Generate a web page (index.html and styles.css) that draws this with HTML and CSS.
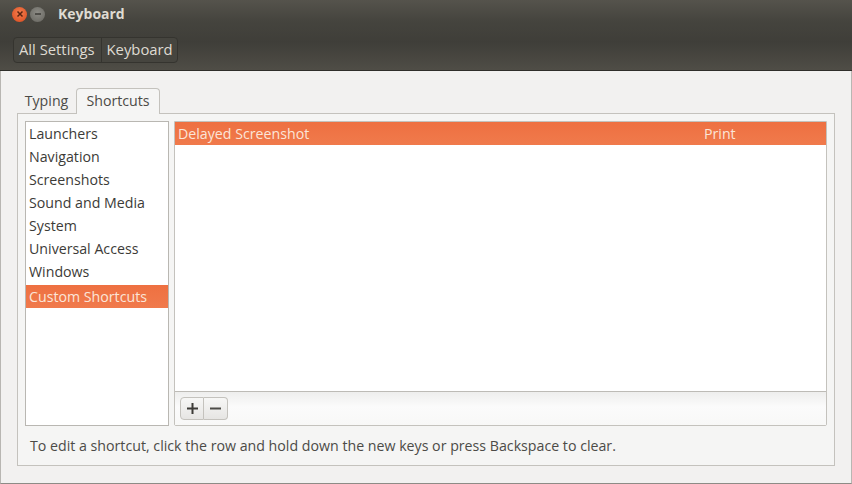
FILE: index.html
```html
<!DOCTYPE html>
<html lang="en">
<head>
    <meta charset="UTF-8">
    <title>Keyboard</title>
    <link rel="stylesheet" href="styles.css">
</head>
<body>

    <!-- Title bar and toolbar -->
    <div class="header">
        <div class="titlebar">
            <span class="win-btn close-btn">
                <svg width="8" height="8" viewBox="0 0 8 8"><path d="M1.5 1.5l5 5M6.5 1.5l-5 5" stroke="#5a2410" stroke-width="1.5" fill="none"/></svg>
            </span>
            <span class="win-btn min-btn">
                <svg width="8" height="8" viewBox="0 0 8 8"><path d="M1 4h6" stroke="#3c3b37" stroke-width="1.5" fill="none"/></svg>
            </span>
            <span class="title">Keyboard</span>
        </div>
        <div class="crumbs">
            <span class="crumb">All Settings</span>
            <span class="crumb">Keyboard</span>
        </div>
    </div>

    <div class="content">
        <div class="tabs">
            <span class="tab">Typing</span>
            <span class="tab active">Shortcuts</span>
        </div>

        <div class="notebook">
            <div class="panes">
                <ul class="categories">
                    <li>Launchers</li>
                    <li>Navigation</li>
                    <li>Screenshots</li>
                    <li>Sound and Media</li>
                    <li>System</li>
                    <li>Universal Access</li>
                    <li>Windows</li>
                    <li class="selected">Custom Shortcuts</li>
                </ul>

                <div class="shortcuts">
                    <div class="shortcut-list">
                        <div class="shortcut-row">
                            <span class="shortcut-name">Delayed Screenshot</span>
                            <span class="shortcut-key">Print</span>
                        </div>
                    </div>
                    <div class="list-toolbar">
                        <button class="tool-btn">
                            <svg width="11" height="11" viewBox="0 0 11 11"><path d="M5.5 0v11M0 5.5h11" stroke="#3c3b37" stroke-width="2" fill="none"/></svg>
                        </button>
                        <button class="tool-btn">
                            <svg width="11" height="11" viewBox="0 0 11 11"><path d="M0 5.5h11" stroke="#4c4b47" stroke-width="2" fill="none"/></svg>
                        </button>
                    </div>
                </div>
            </div>
            <p class="hint">To edit a shortcut, click the row and hold down the new keys or press Backspace to clear.</p>
        </div>
    </div>

</body>
</html>
```

FILE: styles.css
```css
* {
    box-sizing: border-box;
}

html, body {
    height: 100%;
}

body {
    margin: 0;
    display: flex;
    flex-direction: column;
    height: 484px;
    overflow: hidden;
    font-family: "Open Sans", "Noto Sans", sans-serif;
    font-size: 14.2px;
    color: #3c3b37;
    background-color: #f2f1f0;
}

/* Header */
.header {
    flex: none;
    height: 71px;
    padding: 0 12px;
    background: linear-gradient(#55534c 0%, #45443e 30%, #3f3e39 60%, #4f4d46 100%);
    border-bottom: 1px solid #2f2e2a;
}

.titlebar {
    display: flex;
    align-items: center;
    height: 28px;
}

.win-btn {
    display: flex;
    align-items: center;
    justify-content: center;
    width: 15px;
    height: 15px;
    border-radius: 50%;
}

.close-btn {
    background: radial-gradient(circle at 50% 40%, #f57f4f, #d8491d);
}

.min-btn {
    margin-left: 3px;
    background: radial-gradient(circle at 50% 40%, #8d8c86, #65645e);
}

.title {
    margin-left: 13px;
    padding-bottom: 2px;
    font-weight: 700;
    font-size: 14px;
    color: #dfdbd2;
}

.crumbs {
    display: inline-flex;
    height: 26px;
    margin-top: 9px;
    margin-left: 1px;
    font-size: 14.8px;
    border: 1px solid #35342f;
    border-radius: 4px;
    background-color: #46453f;
}

.crumb {
    display: flex;
    align-items: center;
    padding: 0 6px 2px 5px;
    color: #dfdbd2;
    border-right: 1px solid #35342f;
}

.crumb:last-child {
    padding-right: 4px;
    border-right: none;
}

/* Tabs and notebook */
.content {
    flex: 1;
    padding: 17px 17px 17px;
    border-left: 1px solid #b8b6b2;
    border-right: 1px solid #b8b6b2;
    border-bottom: 1px solid #8d8b86;
}

.tabs {
    display: flex;
    height: 26px;
    padding-left: 6px;
    align-items: flex-end;
}

.tab {
    display: flex;
    align-items: center;
    justify-content: center;
    width: 52px;
    height: 24px;
    padding: 0 7px 4px 0;
    color: #4c4b47;
}

.tab.active {
    position: relative;
    z-index: 1;
    width: 84px;
    height: 26px;
    padding: 0 0 2px;
    background-color: #f5f5f4;
    border: 1px solid #c4c2bd;
    border-bottom: none;
    border-radius: 4px 4px 0 0;
}

.notebook {
    height: 353px;
    margin-top: -1px;
    margin-right: -1px;
    margin-left: -1px;
    padding: 7px 7px 0 7px;
    background-color: #f5f5f4;
    border: 1px solid #c4c2bd;
}

.panes {
    display: flex;
    gap: 5px;
    height: 305px;
}

.categories {
    width: 144px;
    margin: 0;
    padding: 1px 0 0;
    list-style: none;
    background-color: #fff;
    border: 1px solid #b9b7b2;
}

.categories li {
    height: 23px;
    padding-left: 3px;
    line-height: 22px;
}

.categories .selected {
    margin-top: 1px;
    line-height: 24px;
    color: #fbe5d8;
    background: linear-gradient(#ee7041, #f07a4c);
}

.shortcuts {
    display: flex;
    flex: 1;
    flex-direction: column;
    border: 1px solid #c4c2bd;
    border-radius: 0 0 2px 2px;
}

.shortcut-list {
    flex: none;
    height: 270px;
    background-color: #fff;
    border-bottom: 1px solid #bdbbb6;
}

.shortcut-row {
    display: flex;
    height: 23px;
    padding-left: 3px;
    line-height: 24px;
    color: #fbe5d8;
    background: linear-gradient(#ee7041, #f07a4c);
}

.shortcut-name {
    width: 526px;
}

.list-toolbar {
    display: flex;
    flex: 1;
    padding: 5px 0 0 5px;
    background: linear-gradient(#eeeeed, #fbfbfb 45%, #f8f8f7);
}

.tool-btn {
    display: flex;
    align-items: center;
    justify-content: center;
    width: 24px;
    height: 23px;
    padding: 0;
    background: linear-gradient(#f7f7f6, #e6e5e3);
    border: 1px solid #c4c2bd;
    border-radius: 4px 0 0 4px;
}

.tool-btn + .tool-btn {
    border-left: none;
    border-radius: 0 4px 4px 0;
}

.hint {
    margin: 10px 0 0 5px;
    line-height: 20px;
    color: #4c4b47;
}
```
